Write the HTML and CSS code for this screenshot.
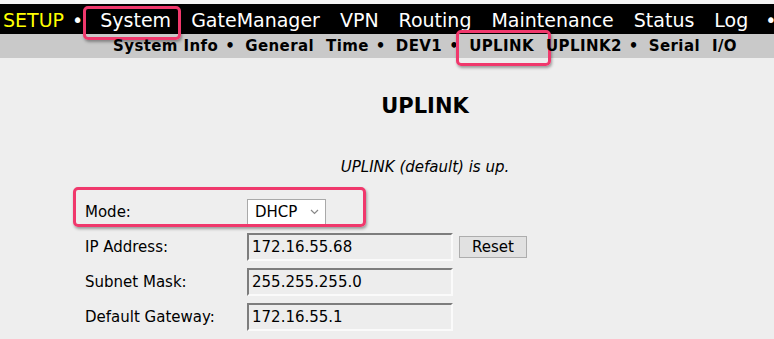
FILE: index.html
```html
<!DOCTYPE html>
<html>

<head>
    <title>UPLINK</title>
    <link rel="stylesheet" href="styles.css">
</head>

<body>
    <div class="topline"></div>
    <nav class="menu">
        <a class="setup">SETUP</a>
        <span class="dot first">&bull;</span>
        <a class="marked">System</a>
        <a>GateManager</a>
        <a>VPN</a>
        <a>Routing</a>
        <a>Maintenance</a>
        <a>Status</a>
        <a>Log</a>
        <span class="dot last">&bull;</span>
    </nav>
    <nav class="submenu">
        <a>System Info</a>
        <span class="dot">&bull;</span>
        <a>General</a>
        <a>Time</a>
        <span class="dot">&bull;</span>
        <a>DEV1</a>
        <span class="dot">&bull;</span>
        <a class="marked">UPLINK</a>
        <a>UPLINK2</a>
        <span class="dot">&bull;</span>
        <a>Serial</a>
        <a>I/O</a>
    </nav>

    <div class="content">
        <h1 class="title">UPLINK</h1>
        <p class="status">UPLINK (default) is up.</p>

        <div class="form">
            <div class="row marked">
                <label>Mode:</label>
                <div class="select">
                    <span>DHCP</span>
                    <svg width="9" height="6" viewBox="0 0 9 6">
                        <path d="M1 1 L4.5 4.5 L8 1" fill="none" stroke="#888" stroke-width="1.2"/>
                    </svg>
                </div>
            </div>
            <div class="row">
                <label>IP Address:</label>
                <input type="text" value="172.16.55.68"/>
                <button>Reset</button>
            </div>
            <div class="row">
                <label>Subnet Mask:</label>
                <input type="text" value="255.255.255.0"/>
            </div>
            <div class="row">
                <label>Default Gateway:</label>
                <input type="text" value="172.16.55.1"/>
            </div>
        </div>
    </div>
</body>

</html>
```

FILE: styles.css
```css
body {
    margin: 0;
    font-family: "DejaVu Sans", Verdana, sans-serif;
    background-color: #eeeeee;
    color: #000;
    overflow: hidden;
}

.topline {
    height: 4px;
    background-color: #f4f4f4;
}

/* main menu */
.menu {
    display: flex;
    height: 28px;
    padding: 2px 0 0 3px;
    background-color: #000;
    white-space: nowrap;
    font-size: 19px;
    line-height: 28px;
}

.menu a {
    color: #fff;
    margin-left: 20px;
    position: relative;
}

.menu a.setup {
    color: #ffff00;
    margin-left: 0;
}

.menu .dot {
    color: #fff;
    margin-left: 8px;
}

.menu .dot.first + a {
    margin-left: 17px;
}

.menu .dot.last {
    margin-left: 17px;
}

/* sub menu */
.submenu {
    display: flex;
    height: 24px;
    padding-left: 113px;
    background-color: #c9c9c9;
    white-space: nowrap;
    font-size: 15px;
    font-weight: bold;
    letter-spacing: 0.4px;
    line-height: 24px;
}

.submenu a {
    margin-right: 12px;
    position: relative;
}

.submenu .dot {
    margin-right: 10px;
    margin-left: -5px;
}

/* pink highlight frames */
.marked::after {
    content: "";
    position: absolute;
    box-sizing: border-box;
    border: 3px solid #f0386c;
    border-radius: 5px;
    box-shadow: 1px 2px 3px rgba(0, 0, 0, 0.35);
    pointer-events: none;
}

.menu a.marked::after {
    left: -17px;
    top: 0;
    width: 98px;
    height: 34px;
}

.submenu a.marked::after {
    left: -13px;
    top: -4px;
    width: 95px;
    height: 36px;
}

.row.marked::after {
    left: -12px;
    top: -7px;
    width: 293px;
    height: 40px;
}

/* page content */
.content {
    width: 690px;
    margin-left: 80px;
}

.title {
    margin: 36px 0 0;
    font-size: 21px;
    line-height: 24px;
    text-align: center;
}

.status {
    margin: 40px 0 0;
    font-size: 15px;
    font-style: italic;
    line-height: 18px;
    text-align: center;
}

.form {
    margin-top: 18px;
    padding-left: 5px;
}

.row {
    position: relative;
    display: flex;
    align-items: center;
    height: 35px;
    font-size: 15px;
}

.row label {
    width: 162px;
}

.select {
    display: flex;
    align-items: center;
    justify-content: space-between;
    box-sizing: border-box;
    width: 79px;
    height: 26px;
    padding: 0 6px 0 7px;
    background-color: #fff;
    border: 1px solid #a9a9a9;
}

.row input {
    box-sizing: border-box;
    width: 206px;
    height: 28px;
    padding: 0 3px;
    margin: 0;
    font-family: inherit;
    font-size: 15px;
    color: #000;
    background-color: #ededed;
    border-style: solid;
    border-width: 2px;
    border-color: #7d7d7d #fafafa #fafafa #7d7d7d;
}

.row button {
    box-sizing: border-box;
    width: 68px;
    height: 22px;
    margin-left: 6px;
    padding: 0;
    font-family: inherit;
    font-size: 15px;
    color: #000;
    background-color: #e1e1e1;
    border: 1px solid #adadad;
}
```
